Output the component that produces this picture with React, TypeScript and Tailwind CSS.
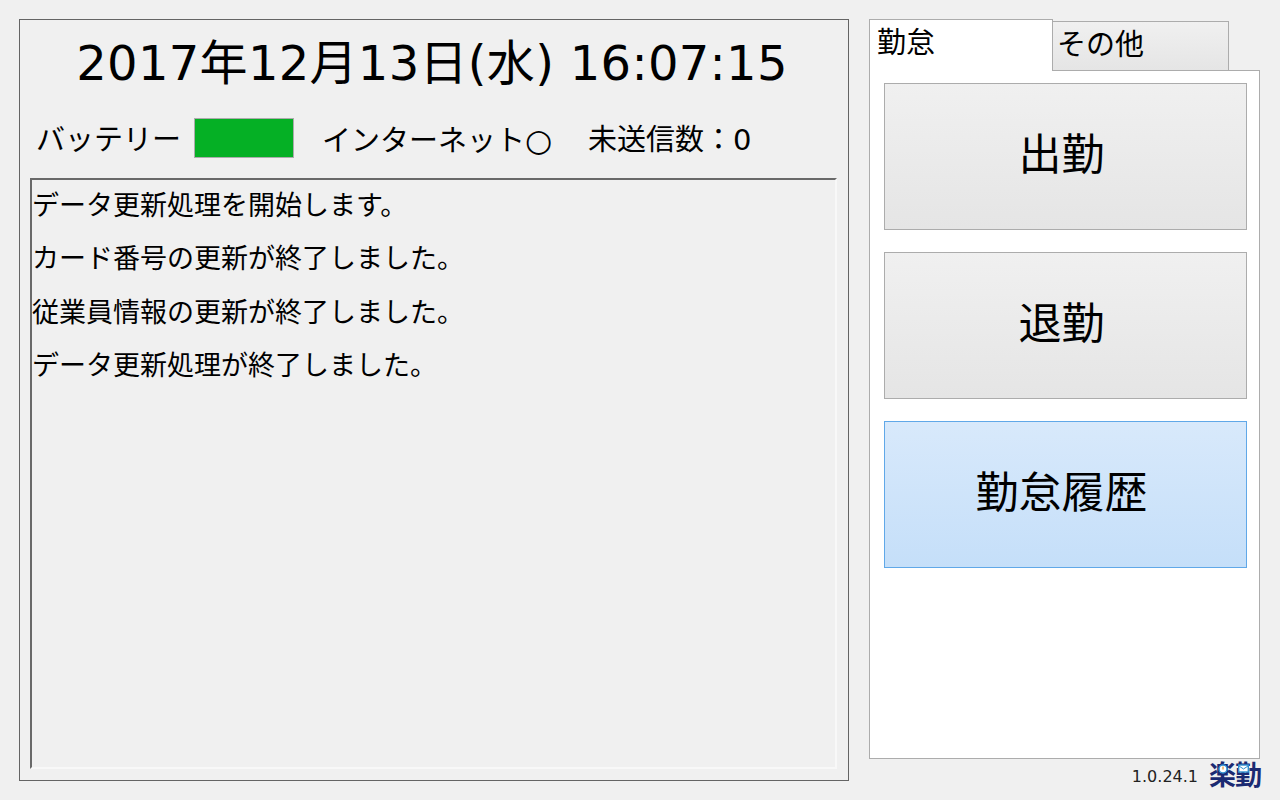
const font = { fontFamily: '"DejaVu Sans", "Noto Sans CJK JP", sans-serif' };

function Logo() {
  return (
    <span className="relative block w-[54px] h-[28px] leading-[26px] text-[27px] tracking-[-1px] font-bold text-[#1b2a72] whitespace-nowrap">
      楽勤
      <svg className="absolute left-[9px] top-[1px]" width="10" height="10" viewBox="0 0 10 10">
        <circle cx="5" cy="5" r="4" fill="#fff" stroke="#2f8fd0" strokeWidth="1.5" />
        <path d="M5 2.5V5.5" stroke="#e8942a" strokeWidth="1.2" />
      </svg>
      <svg className="absolute left-[29px] top-[1px]" width="11" height="9" viewBox="0 0 11 9">
        <rect x="0.7" y="1" width="9.6" height="7" fill="#fff" stroke="#2f8fd0" strokeWidth="1.4" />
        <path d="M1 2L5.5 5L10 2" fill="none" stroke="#2f8fd0" strokeWidth="1" />
      </svg>
    </span>
  );
}

function ActionButton({ label, active }: { label: string; active?: boolean }) {
  return (
    <button
      className={
        active
          ? "h-[147px] w-full shrink-0 border border-[#60a8e8] bg-gradient-to-b from-[#d8e9fb] to-[#c5dff9] pr-[8px] pb-[2px] text-[43px] text-black"
          : "h-[147px] w-full shrink-0 border border-[#acacac] bg-gradient-to-b from-[#f0f0f0] to-[#e5e5e5] pr-[8px] pb-[2px] text-[43px] text-black"
      }
    >
      {label}
    </button>
  );
}

export default function App() {
  const logs = [
    "データ更新処理を開始します。",
    "カード番号の更新が終了しました。",
    "従業員情報の更新が終了しました。",
    "データ更新処理が終了しました。",
  ];
  return (
    <div style={font} className="w-[1280px] h-[800px] overflow-hidden bg-[#f0f0f0] text-black flex pl-[19px] pt-[19px]">
      <section className="w-[830px] h-[762px] shrink-0 border border-[#646464] flex flex-col pl-[10px] pr-[11px]">
        <h1 className="h-[84px] pr-[3px] text-[48px] leading-[87px] tracking-[0.3px] font-normal text-center whitespace-nowrap">2017年12月13日(水) 16:07:15</h1>
        <div className="h-[75px] pb-[8px] flex items-center text-[29px] whitespace-nowrap">
          <span className="ml-[6px] pt-[6px]">バッテリー</span>
          <span className="ml-[13px] w-[100px] h-[40px] bg-[#05b025] border border-[#acacac]" />
          <span className="ml-[28px] pt-[6px]">インターネット<span className="text-[31px]">○</span></span>
          <span className="ml-[36px] pt-[6px]">未送信数：0</span>
        </div>
        <div className="w-[807px] h-[591px] border-2 border-t-[#696969] border-l-[#696969] border-r-[#f8f8f8] border-b-[#f8f8f8] text-[27px] leading-[53.3px] -mt-[1px]">
          <div className="-mt-[1px]">
            {logs.map((l) => (
              <div key={l} className="whitespace-nowrap">{l}</div>
            ))}
          </div>
        </div>
      </section>
      <section className="ml-[20px] w-[391px] shrink-0 flex flex-col">
        <div className="relative z-10 flex items-start h-[52px] -mb-px shrink-0">
          <div className="w-[184px] h-[52px] bg-white border border-[#acacac] border-b-0 pl-[7px] text-[29px] leading-[47px]">勤怠</div>
          <div className="w-[176px] h-[50px] mt-[2px] border border-l-0 border-[#acacac] bg-gradient-to-b from-[#f0f0f0] to-[#e5e5e5] pl-[4px] text-[29px] leading-[47px]">その他</div>
        </div>
        <div className="w-[391px] h-[689px] shrink-0 bg-white border border-[#acacac] pl-[14px] pr-[12px] pt-[12px] flex flex-col gap-[22px]">
          <ActionButton label="出勤" />
          <ActionButton label="退勤" />
          <ActionButton label="勤怠履歴" active />
        </div>
        <div className="flex items-center justify-end h-[36px] shrink-0">
          <span className="text-[16px] text-[#222]">1.0.24.1</span>
          <span className="ml-[11px] mr-[-3px]"><Logo /></span>
        </div>
      </section>
    </div>
  );
}
